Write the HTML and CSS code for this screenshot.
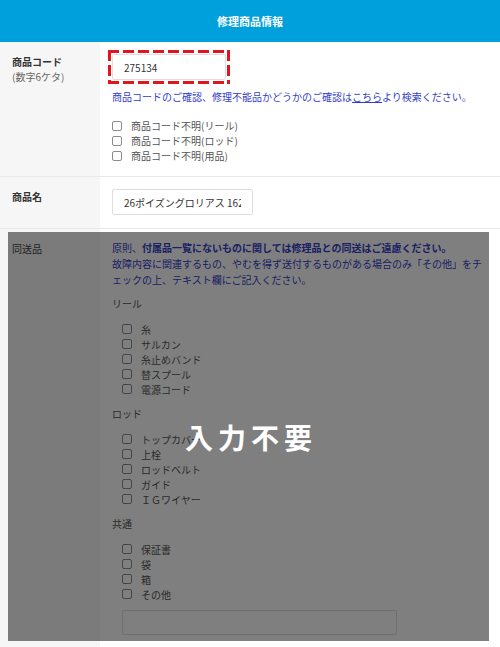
FILE: index.html
```html
<!DOCTYPE html>
<html lang="ja">
<head>
<meta charset="utf-8">
<title>修理商品情報</title>
<link rel="stylesheet" href="styles.css">
</head>
<body>
<header class="title-bar">修理商品情報</header>

<section class="form">
  <div class="row">
    <div class="row-label">
      <span class="label-main">商品コード</span>
      <span class="label-sub">(数字6ケタ)</span>
    </div>
    <div class="row-body">
      <div class="code-highlight">
        <input class="text-input code-input" type="text" value="275134">
      </div>
      <p class="note">商品コードのご確認、修理不能品かどうかのご確認は<a class="note-link" href="#">こちら</a>より検索ください。</p>
      <ul class="checklist">
        <li><span class="box"></span>商品コード不明(リール)</li>
        <li><span class="box"></span>商品コード不明(ロッド)</li>
        <li><span class="box"></span>商品コード不明(用品)</li>
      </ul>
    </div>
  </div>

  <div class="row">
    <div class="row-label">
      <span class="label-main">商品名</span>
    </div>
    <div class="row-body">
      <input class="text-input name-input" type="text" value="26ポイズングロリアス 162L-S">
    </div>
  </div>

  <div class="row row-locked">
    <div class="row-label">
      <span class="label-plain">同送品</span>
    </div>
    <div class="row-body row-body-tall">
      <p class="note note-block">原則、<strong>付属品一覧にないものに関しては修理品との同送はご遠慮ください。</strong><br>故障内容に関連するもの、やむを得ず送付するものがある場合のみ「その他」をチェックの上、テキスト欄にご記入ください。</p>

      <p class="group-title group-first">リール</p>
      <ul class="checklist checklist-indent">
        <li><span class="box"></span>糸</li>
        <li><span class="box"></span>サルカン</li>
        <li><span class="box"></span>糸止めバンド</li>
        <li><span class="box"></span>替スプール</li>
        <li><span class="box"></span>電源コード</li>
      </ul>

      <p class="group-title">ロッド</p>
      <ul class="checklist checklist-indent">
        <li><span class="box"></span>トップカバー</li>
        <li><span class="box"></span>上栓</li>
        <li><span class="box"></span>ロッドベルト</li>
        <li><span class="box"></span>ガイド</li>
        <li><span class="box"></span>ＩＧワイヤー</li>
      </ul>

      <p class="group-title">共通</p>
      <ul class="checklist checklist-indent">
        <li><span class="box"></span>保証書</li>
        <li><span class="box"></span>袋</li>
        <li><span class="box"></span>箱</li>
        <li><span class="box"></span>その他</li>
      </ul>

      <textarea class="other-text"></textarea>
    </div>

    <div class="lock-overlay">入力不要</div>
  </div>
</section>
</body>
</html>
```

FILE: styles.css
```css
body {
  margin: 0;
  font-family: "Noto Sans CJK JP", "Noto Sans", sans-serif;
  font-size: 10px;
  color: #333;
  background: #fff;
}

.title-bar {
  height: 42px;
  background: #00a0dc;
  color: #fff;
  font-size: 11px;
  font-weight: 700;
  display: flex;
  align-items: center;
  justify-content: center;
}

.row {
  display: grid;
  grid-template-columns: 100px 1fr;
  border-bottom: 1px solid #e8e8e8;
}

.row-label {
  background: #f6f6f6;
  padding: 12px;
  line-height: 15px;
}

.label-main {
  display: block;
  font-weight: 700;
}

.label-sub {
  display: block;
  color: #666;
}

.label-plain {
  display: block;
  color: #444;
}

.row-body {
  padding: 12px 12px 13px;
  min-width: 0;
}

/* red dashed frame around the product code field */
.code-highlight {
  width: fit-content;
  margin: -4px 0 0 -4px;
  padding: 4px;
  background:
    repeating-linear-gradient(90deg, #e2141c 0 11px, transparent 11px 15px) left top / 100% 3px no-repeat,
    repeating-linear-gradient(90deg, #e2141c 0 11px, transparent 11px 15px) left bottom / 100% 3px no-repeat,
    repeating-linear-gradient(180deg, #e2141c 0 11px, transparent 11px 15px) left top / 3px 100% no-repeat,
    repeating-linear-gradient(180deg, #e2141c 0 11px, transparent 11px 15px) right top / 3px 100% no-repeat;
}

.text-input {
  display: block;
  box-sizing: border-box;
  height: 26px;
  margin: 0;
  border: 1px solid #dedede;
  border-radius: 2px;
  padding: 0 11px;
  font-family: inherit;
  font-size: 10px;
  color: #333;
  background: #fff;
  outline: none;
}

.code-input {
  width: 114px;
}

.name-input {
  width: 141px;
}

.note {
  margin: 5px 0 0;
  line-height: 16px;
  color: #3340c8;
  line-break: normal;
}

.note-block {
  margin-top: -1px;
}

.note strong {
  font-weight: 700;
}

.note-link {
  color: #3340c8;
  text-decoration: underline;
}

.checklist {
  list-style: none;
  margin: 13px 0 0;
  padding: 0;
}

.checklist li {
  display: flex;
  align-items: center;
  line-height: 15px;
  color: #555;
}

.box {
  flex: none;
  width: 10px;
  height: 10px;
  box-sizing: border-box;
  border: 1px solid #8c8c8c;
  border-radius: 2px;
  margin-right: 9px;
  background: #fff;
}

.checklist-indent {
  margin-top: 10.5px;
  padding-left: 10px;
}

.group-title {
  margin: 9.5px 0 0;
  line-height: 15px;
  color: #555;
}

.group-first {
  margin-top: 8px;
}

.other-text {
  display: block;
  box-sizing: border-box;
  width: 275px;
  height: 25px;
  margin: 8px 0 0 10px;
  border: 1px solid #dedede;
  border-radius: 2px;
  resize: none;
  font-family: inherit;
  background: #fff;
}

.row-body-tall {
  padding-bottom: 40px;
}

/* dimmed cover over the section that needs no input */
.row-locked {
  position: relative;
}

.lock-overlay {
  position: absolute;
  top: 3px;
  left: 8px;
  width: 481px;
  height: 409px;
  box-sizing: border-box;
  padding-left: 5px;
  background: rgba(0, 0, 0, 0.5);
  display: flex;
  align-items: center;
  justify-content: center;
  color: #fff;
  font-size: 28px;
  font-weight: 700;
  letter-spacing: 5px;
}
```
